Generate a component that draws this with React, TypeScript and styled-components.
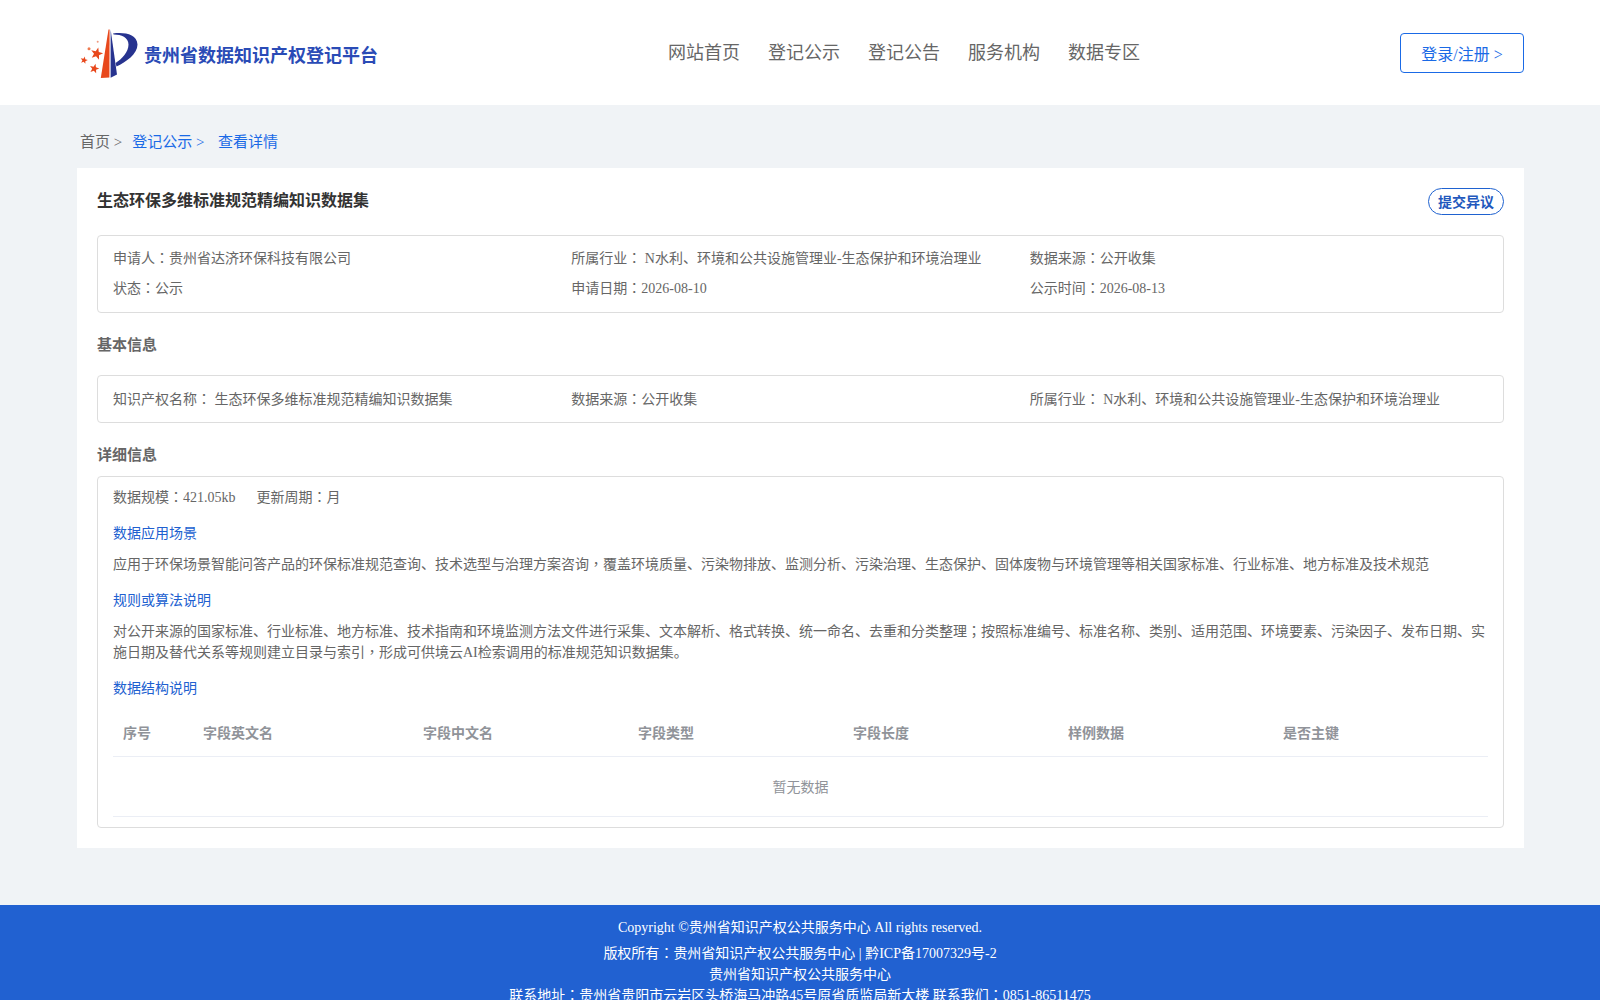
import React from 'react'
import styled, { createGlobalStyle } from 'styled-components'

const GlobalStyle = createGlobalStyle`
  html, body {
    margin: 0;
    padding: 0;
    background: #f0f3f6;
    font-family: "Liberation Serif", "Noto Sans CJK SC", serif;
    font-size: 14px;
    color: #666;
    overflow-x: hidden;
  }
  * {
    box-sizing: border-box;
  }
`

const Header = styled.header`
  height: 105px;
  background: #fff;
  padding: 0 76px 0 80px;
  display: grid;
  grid-template-columns: 587px 1fr auto;
`

const Brand = styled.div`
  display: flex;
  align-items: center;
  gap: 6px;
  padding-top: 3px;
`

const BrandName = styled.span`
  font-family: "Noto Sans CJK SC", sans-serif;
  font-size: 18px;
  font-weight: 700;
  color: #2a4bb6;
`

const Nav = styled.nav`
  display: flex;
  gap: 28px;
  padding: 37px 0 0 1px;
`

const NavItem = styled.a`
  font-family: "Noto Sans CJK SC", sans-serif;
  font-size: 18px;
  line-height: 28px;
  height: 28px;
  color: #666;
`

const LoginButton = styled.a`
  width: 124px;
  height: 40px;
  margin-top: 33px;
  border: 1px solid #1a6ae6;
  border-radius: 4px;
  font-size: 16px;
  color: #1a6ae6;
  display: flex;
  align-items: center;
  justify-content: center;
`

const Main = styled.main`
  padding: 0 76px 57px 77px;
`

const Breadcrumb = styled.div`
  height: 63px;
  padding: 26px 0 0 3px;
  font-size: 15px;
  line-height: 22px;
  display: flex;
`

const Crumb = styled.span<{ $active?: boolean }>`
  color: ${p => (p.$active ? '#1a6ae6' : '#666')};
  margin-right: ${p => (p.$active ? '13.5px' : '10px')};
`

const Card = styled.section`
  background: #fff;
  padding: 20px;
  height: 680px;
`

const TitleRow = styled.div`
  display: flex;
  justify-content: space-between;
  align-items: flex-start;
  height: 47px;
`

const Title = styled.h1`
  margin: -1px 0 0;
  font-family: "Noto Sans CJK SC", sans-serif;
  font-size: 16px;
  line-height: 24px;
  font-weight: 700;
  color: #333;
`

const DissentButton = styled.button`
  width: 76px;
  height: 27px;
  padding: 0 0 2px;
  background: #fff;
  border: 1px solid #1f62d0;
  border-radius: 14px;
  font-family: "Noto Sans CJK SC", sans-serif;
  font-size: 14px;
  font-weight: 700;
  color: #2258bd;
`

const Box = styled.div`
  border: 1px solid #ddd;
  border-radius: 4px;
  padding: 0 15px;
`

const SummaryBox = styled(Box)`
  height: 78px;
  padding-top: 8px;
`

const InfoBox = styled(Box)`
  height: 48px;
  padding-top: 9px;
`

const Row = styled.div`
  display: grid;
  grid-template-columns: repeat(3, 1fr);
  height: 30px;
  line-height: 30px;
`

const SectionTitle = styled.h2<{ $height: number }>`
  margin: 0;
  height: ${p => p.$height}px;
  font-family: "Noto Sans CJK SC", sans-serif;
  font-size: 15px;
  line-height: 61px;
  font-weight: 700;
  color: #666;
`

const DetailBox = styled(Box)`
  height: 352px;
  padding-top: 10px;
`

const Meta = styled.div`
  display: flex;
  gap: 21px;
  line-height: 21px;
`

const SubHeading = styled.div`
  margin-top: 15px;
  line-height: 22px;
  color: #2060d0;
`

const Paragraph = styled.p`
  margin: 9px 0 0;
  line-height: 21px;
`

const Mark = styled.span`
  font-family: "Noto Sans CJK TC", sans-serif;
  line-height: 0;
`

const TableHead = styled.div`
  display: grid;
  grid-template-columns: 80px 220px repeat(5, 1fr);
  height: 47px;
  margin-top: 10px;
  padding-bottom: 2px;
  border-bottom: 1px solid #ebeef5;
  align-items: center;
`

const HeadCell = styled.div`
  padding-left: 10px;
  font-family: "Noto Sans CJK SC", sans-serif;
  font-weight: 700;
  color: #909399;
`

const EmptyRow = styled.div`
  height: 60px;
  padding-bottom: 2px;
  border-bottom: 1px solid #ebeef5;
  display: flex;
  align-items: center;
  justify-content: center;
  color: #909399;
`

const Footer = styled.footer`
  background: #2161d1;
  color: #fff;
  text-align: center;
  padding-top: 12px;
  height: 95px;
  overflow: hidden;
`

const Copyright = styled.div`
  line-height: 21px;
  margin-bottom: 5px;
`

const FooterLine = styled.div`
  line-height: 21px;
`

// the reference sets ： ， ； in the middle of the em box, the TC cut does that too
const Zh: React.FC<{ text: string }> = ({ text }) => (
  <>
    {text.split(/([：，；])/).map((part, i) => (i % 2 ? <Mark key={i}>{part}</Mark> : part))}
  </>
)

const starPath = (cx: number, cy: number, r: number) => {
  const pts: string[] = []
  for (let i = 0; i < 10; i++) {
    const rad = i % 2 ? r * 0.42 : r
    const a = -Math.PI / 2 + 0.25 + (i * Math.PI) / 5
    pts.push(`${(cx + rad * Math.cos(a)).toFixed(2)},${(cy + rad * Math.sin(a)).toFixed(2)}`)
  }
  return `M${pts.join(' L')} Z`
}

const Logo = () => (
  <svg width="58" height="50" viewBox="0 0 58 50">
    <path d="M28.5 0.5 L20.8 49 L29.4 48.6 L29.6 0.5 Z" fill="#e8481c" />
    <path d="M30.6 0.5 L30.6 48.8 L37 45.5 Z" fill="#27338f" />
    <path
      d="M33 4.5 C44 3 57 5 57.5 15.5 C57.5 25 46 33 36.5 37.5 L35.6 34 C42 30 48.5 23 48.5 15.5 C48.5 8.5 41 5.5 33.6 5.6 Z"
      fill="#27338f"
    />
    <path d={starPath(16.7, 24.7, 6.4)} fill="#e8481c" />
    <path d={starPath(4, 31.3, 3.8)} fill="#e8481c" />
    <path d={starPath(14.3, 39.7, 5)} fill="#e8481c" />
    <circle cx="9" cy="19.7" r="1.5" fill="#ee7a50" />
    <circle cx="17.7" cy="12.7" r="1" fill="#ee9a80" />
  </svg>
)

const columns = ['序号', '字段英文名', '字段中文名', '字段类型', '字段长度', '样例数据', '是否主键']

const App: React.FC = () => (
  <>
    <GlobalStyle />
    <Header>
      <Brand>
        <Logo />
        <BrandName>贵州省数据知识产权登记平台</BrandName>
      </Brand>
      <Nav>
        {['网站首页', '登记公示', '登记公告', '服务机构', '数据专区'].map(item => (
          <NavItem key={item}>{item}</NavItem>
        ))}
      </Nav>
      <LoginButton>登录/注册 &gt;</LoginButton>
    </Header>
    <Main>
      <Breadcrumb>
        <Crumb>首页 &gt;</Crumb>
        <Crumb $active>登记公示 &gt;</Crumb>
        <Crumb $active>查看详情</Crumb>
      </Breadcrumb>
      <Card>
        <TitleRow>
          <Title>生态环保多维标准规范精编知识数据集</Title>
          <DissentButton>提交异议</DissentButton>
        </TitleRow>
        <SummaryBox>
          <Row>
            <span><Zh text="申请人：贵州省达济环保科技有限公司" /></span>
            <span><Zh text="所属行业： N水利、环境和公共设施管理业-生态保护和环境治理业" /></span>
            <span><Zh text="数据来源：公开收集" /></span>
          </Row>
          <Row>
            <span><Zh text="状态：公示" /></span>
            <span><Zh text="申请日期：2026-08-10" /></span>
            <span><Zh text="公示时间：2026-08-13" /></span>
          </Row>
        </SummaryBox>
        <SectionTitle $height={62}>基本信息</SectionTitle>
        <InfoBox>
          <Row>
            <span><Zh text="知识产权名称： 生态环保多维标准规范精编知识数据集" /></span>
            <span><Zh text="数据来源：公开收集" /></span>
            <span><Zh text="所属行业： N水利、环境和公共设施管理业-生态保护和环境治理业" /></span>
          </Row>
        </InfoBox>
        <SectionTitle $height={53}>详细信息</SectionTitle>
        <DetailBox>
          <Meta>
            <span><Zh text="数据规模：421.05kb" /></span>
            <span><Zh text="更新周期：月" /></span>
          </Meta>
          <SubHeading>数据应用场景</SubHeading>
          <Paragraph>
            <Zh text="应用于环保场景智能问答产品的环保标准规范查询、技术选型与治理方案咨询，覆盖环境质量、污染物排放、监测分析、污染治理、生态保护、固体废物与环境管理等相关国家标准、行业标准、地方标准及技术规范" />
          </Paragraph>
          <SubHeading>规则或算法说明</SubHeading>
          <Paragraph>
            <Zh text="对公开来源的国家标准、行业标准、地方标准、技术指南和环境监测方法文件进行采集、文本解析、格式转换、统一命名、去重和分类整理；按照标准编号、标准名称、类别、适用范围、环境要素、污染因子、发布日期、实施日期及替代关系等规则建立目录与索引，形成可供境云AI检索调用的标准规范知识数据集。" />
          </Paragraph>
          <SubHeading>数据结构说明</SubHeading>
          <TableHead>
            {columns.map(col => (
              <HeadCell key={col}>{col}</HeadCell>
            ))}
          </TableHead>
          <EmptyRow>暂无数据</EmptyRow>
        </DetailBox>
      </Card>
    </Main>
    <Footer>
      <Copyright>Copyright ©贵州省知识产权公共服务中心 All rights reserved.</Copyright>
      <FooterLine><Zh text="版权所有：贵州省知识产权公共服务中心 | 黔ICP备17007329号-2" /></FooterLine>
      <FooterLine>贵州省知识产权公共服务中心</FooterLine>
      <FooterLine><Zh text="联系地址：贵州省贵阳市云岩区头桥海马冲路45号原省质监局新大楼 联系我们：0851-86511475" /></FooterLine>
    </Footer>
  </>
)

export default App
